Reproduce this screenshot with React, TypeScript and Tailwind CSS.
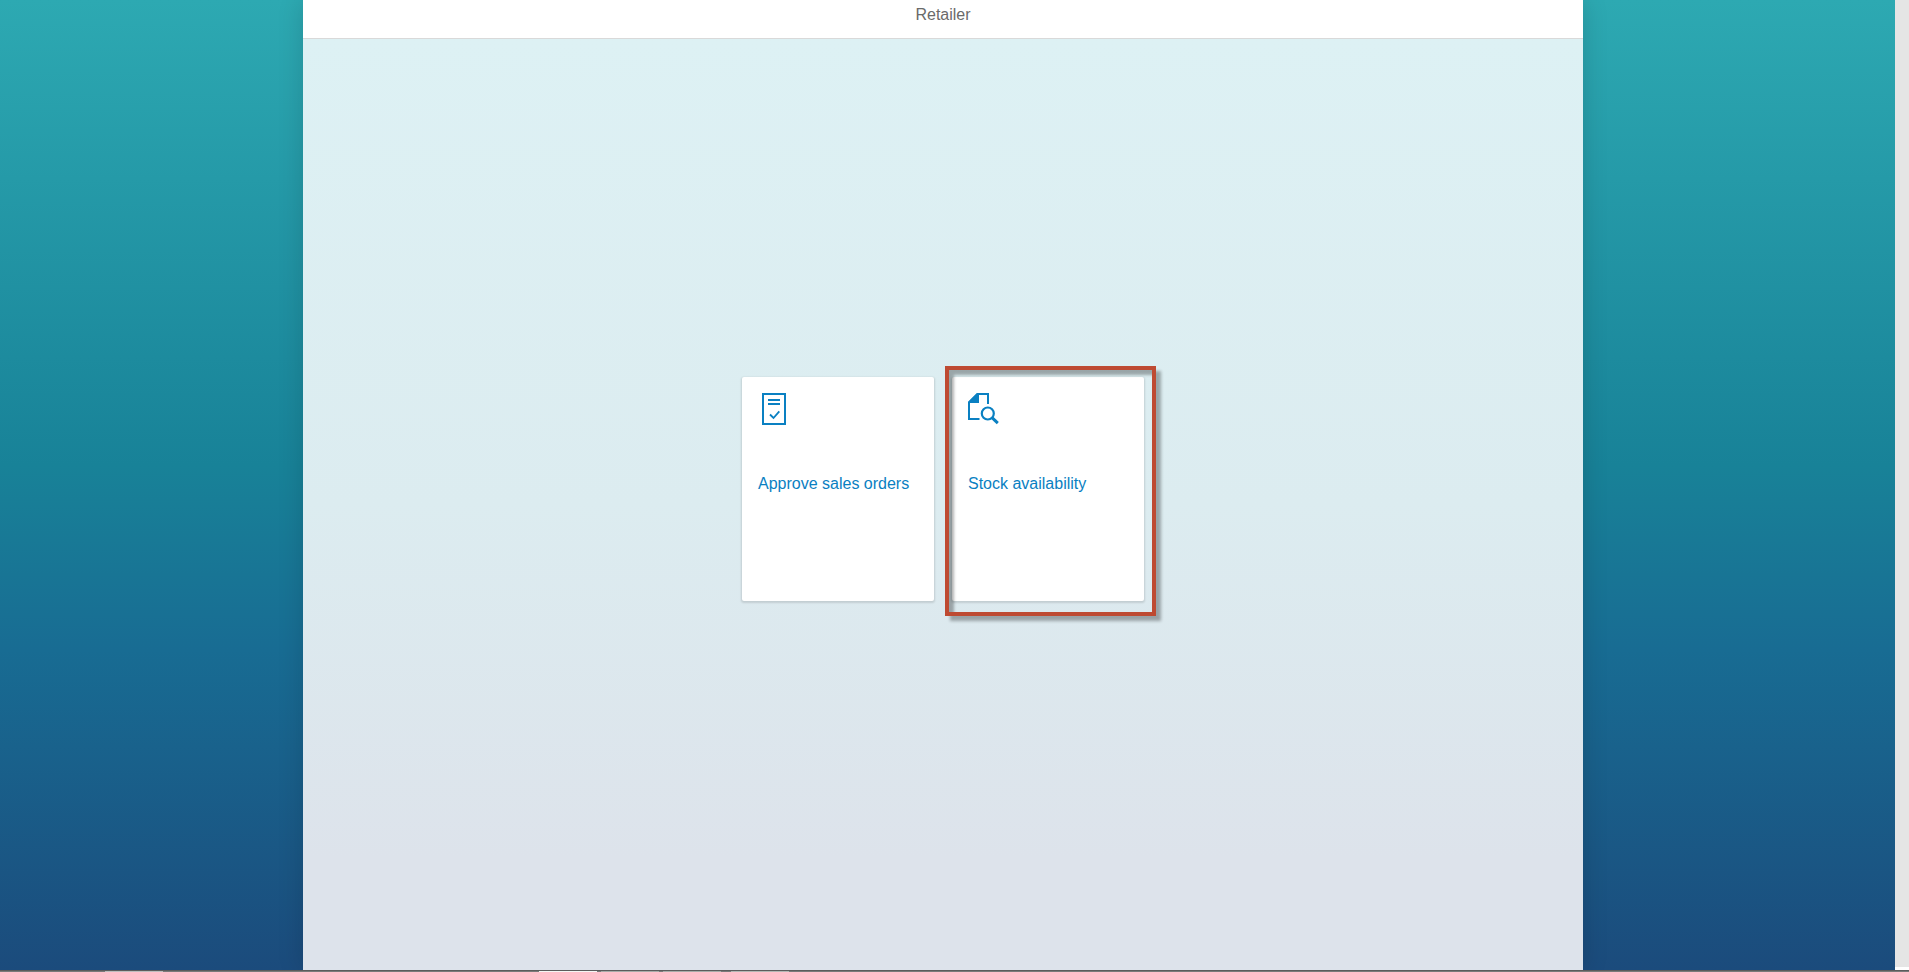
import type { ReactNode } from "react";

function ApproveIcon() {
  return (
    <svg width="24" height="32" viewBox="0 0 24 32" fill="none" stroke="currentColor" strokeWidth="2" aria-hidden="true">
      <path d="M1 1H23V31H1Z" />
      <path d="M6 7H18M6 11H18" />
      <path d="M8 21.5L11.5 25L17.300 18.300" strokeWidth="1.800" />
    </svg>
  );
}

function StockIcon() {
  return (
    <svg width="32" height="32" viewBox="0 0 32 32" fill="none" stroke="currentColor" strokeWidth="2" aria-hidden="true">
      <path d="M11.5 26H1V9.500L9.500 1H20V11" />
      <path d="M0 10V9L9 0H11V10Z" fill="currentColor" stroke="none" />
      <circle cx="19.800" cy="20.500" r="6" strokeWidth="2.200" />
      <path d="M24 24.700L29.800 30.200" strokeWidth="3" />
    </svg>
  );
}

function Tile({ label, icon, highlighted = false }: { label: string; icon: ReactNode; highlighted?: boolean }) {
  return (
    <div className="relative">
      <a
        href="#"
        className="flex h-56 w-48 flex-col rounded-xs bg-white p-4 text-[#0a80c2] shadow-[0_1px_2px_1px_rgba(0,0,0,0.12)]"
      >
        <span className="flex h-[81px] items-start">{icon}</span>
        <span className="text-base leading-5">{label}</span>
      </a>
      {highlighted && (
        <span className="pointer-events-none absolute -top-[11px] -right-3 -bottom-[15px] -left-[7px] border-4 border-[#be4a32] shadow-[5px_5px_3px_0px_rgba(0,0,0,0.3),inset_5px_5px_3px_0px_rgba(0,0,0,0.3)]" />
      )}
    </div>
  );
}

export default function App() {
  return (
    <div className="flex h-screen flex-col overflow-hidden font-['Liberation_Sans',Arial,sans-serif]">
      <div className="flex min-h-0 flex-1">
        <main className="flex flex-1 justify-center bg-[linear-gradient(to_bottom,#2da9b2_0%,#188298_48%,#186c93_67%,#1b4b7c_100%)] pr-[9px]">
          <section className="flex w-full max-w-7xl flex-col bg-white shadow-[0_0_24px_rgba(0,0,0,0.15)]">
            <header className="flex h-[39px] justify-center border-b border-[#d9d9d9] pt-[5px]">
              <h1 className="text-base leading-5 text-[#6a6a6a]">Retailer</h1>
            </header>
            <div className="flex flex-1 items-center justify-center gap-[18px] bg-[linear-gradient(to_bottom,#ddf1f4_0%,#dcecf0_50%,#dde3eb_88%,#dde3eb_100%)] pb-[31px]">
              <Tile label="Approve sales orders" icon={<span className="pl-1"><ApproveIcon /></span>} />
              <Tile label="Stock availability" icon={<StockIcon />} highlighted />
            </div>
          </section>
        </main>
        <div className="w-3.5 border-b-3 border-white bg-[#e5e5e5]" />
      </div>
      <footer className="flex h-0.5 border-t border-[#5c5c5c] bg-[#7a7a7a]">
        <span className="ml-[105px] w-[58px] bg-[#bdbdbd]" />
        <span className="ml-[376px] w-[58px] bg-[#f4f6f4]" />
        <span className="ml-1 w-[58px] bg-[#a9aca9]" />
        <span className="ml-1 w-[58px] bg-[#a9aca9]" />
        <span className="ml-2.5 w-[58px] bg-[#b4b7b4]" />
      </footer>
    </div>
  );
}
